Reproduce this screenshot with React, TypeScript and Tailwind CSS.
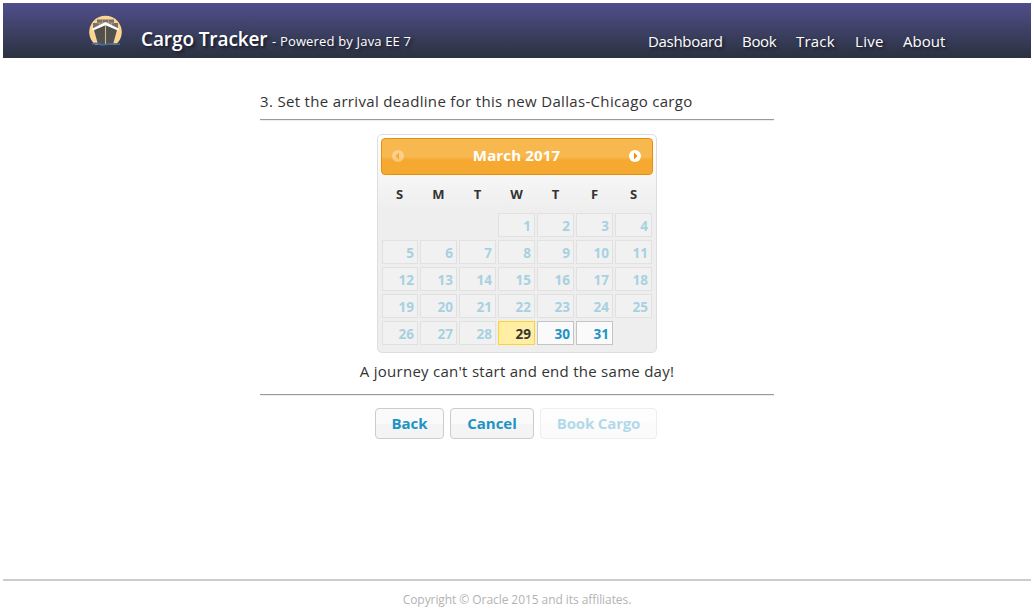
import React from "react";

const weeks: (number | null)[][] = [
  [null, null, null, 1, 2, 3, 4],
  [5, 6, 7, 8, 9, 10, 11],
  [12, 13, 14, 15, 16, 17, 18],
  [19, 20, 21, 22, 23, 24, 25],
  [26, 27, 28, 29, 30, 31, null],
];

function Logo() {
  return (
    <svg className="ml-[85px] mt-2.5 h-[34px] w-[35px] shrink-0" viewBox="0 0 35 34">
      <path d="M7 31.500A16.300 16.300 0 1 1 28 31.500Z" fill="#fdd592" />
      <path d="M9 10V6.500h17V10h4v7H5v-7Z" fill="#77716c" />
      <path d="M9 10h17M14.500 6.500V10M20.500 6.500V10M11.500 10v5M23.500 10v5" stroke="#bca684" strokeWidth=".8" fill="none" />
      <path d="M6 17 17.500 11 29 17 25 31.500H10Z" fill="#51504f" />
      <path d="M4.500 15.500 17.500 9 30.500 15.500v2.300L17.500 12.200 4.500 17.800Z" fill="#fff" />
      <path d="M17.500 12v19" stroke="#d6b981" strokeWidth="1.100" />
      <path d="M4 31q4-1.500 7 0t7 .5 7-.7 7 .5" stroke="#42719f" strokeWidth="1.400" fill="none" />
    </svg>
  );
}

function Arrow({ next = false }: { next?: boolean }) {
  return (
    <svg className={next ? "mb-0.5 h-3 w-3" : "mb-0.5 h-3 w-3 opacity-35"} viewBox="0 0 12 12">
      <circle cx="6" cy="6" r="6" fill="#fff" />
      <path d={next ? "M5 2.500v7L8.500 6Z" : "M7 2.500v7L3.500 6Z"} fill="#f08f00" />
    </svg>
  );
}

function Day({ day }: { day: number | null }) {
  if (day === null) return <span />;
  const look =
    day === 29
      ? "border-[#fed22f] bg-[#ffeea3] text-[#363636]"
      : day > 29
        ? "border-[#c4c4c4] bg-[#fafafa] text-[#1c94c4]"
        : "border-[#e1e1e1] bg-[#f1f1f1] text-[#a7d1e1]";
  return (
    <span className={`h-6 border pr-[3px] pt-px text-right text-[13.500px] font-bold leading-[23px] ${look}`}>{day}</span>
  );
}

export default function App() {
  return (
    <div className="flex h-[615px] flex-col bg-white p-[3px] pb-0 font-['Open_Sans','Noto_Sans',sans-serif] text-[#333]">
      <header className="flex h-[55px] shrink-0 bg-linear-to-b from-[#514e8c] to-[#2b3240] text-white [text-shadow:2px_2px_3px_#1b1b28]">
        <Logo />
        <div className="ml-[18px] flex items-baseline whitespace-pre pt-[22px]">
          <span className="w-[131px] text-[19px] font-semibold leading-7 tracking-[-0.100px]">Cargo Tracker</span>
          <span className="text-[13px] font-medium tracking-[0.170px]">- Powered by Java EE 7</span>
        </div>
        <nav className="ml-auto mr-[86px] flex gap-[19px] pt-[26px] text-[15px] font-medium leading-6">
          <a className="w-[75px] tracking-[-0.300px]">Dashboard</a>
          <a className="w-[35px] tracking-[-0.300px]">Book</a>
          <a className="w-[40px] tracking-[0.200px]">Track</a>
          <a className="w-[29px] tracking-[0.300px]">Live</a>
          <a className="w-[42px]">About</a>
        </nav>
      </header>

      <main className="mx-auto flex w-[514px] flex-col items-center">
        <h1 className="mt-[31px] h-[30px] w-full whitespace-nowrap text-[15px] leading-6 tracking-[0.325px]">3. Set the arrival deadline for this new Dallas-Chicago cargo</h1>
        <div className="h-0.5 w-full border-b border-t border-b-[#eee] border-t-[#9a9a9a]" />
        <section className="mt-[13px] h-[219px] w-[280px] rounded-[5px] border border-[#ddd] bg-linear-to-b from-white via-[#eee] via-35% to-[#eee] p-[3px]">
          <div className="flex h-[37px] items-center justify-between rounded-[4px] border border-[#e78f08] bg-linear-to-b from-[#f8b850] from-50% to-[#f6a931] to-60% pl-2.5 pr-[11px] text-white">
            <Arrow />
            <span className="pb-0.5 text-[15px] font-bold tracking-[0.150px]">March 2017</span>
            <Arrow next />
          </div>
          <div className="-ml-px grid h-[38px] grid-cols-7 pt-[7px] text-center text-[13px] font-bold leading-6">
            {["S", "M", "T", "W", "T", "F", "S"].map((d, i) => <span key={i}>{d}</span>)}
          </div>
          <div className="ml-px grid grid-cols-[36px_repeat(6,37px)] gap-x-0.5 gap-y-[3px]">
            {weeks.flat().map((d, i) => <Day key={i} day={d} />)}
          </div>
        </section>
        <p className="mt-1.5 h-[35px] whitespace-nowrap text-[15px] leading-6 tracking-[0.270px]">A journey can't start and end the same day!</p>
        <div className="h-0.5 w-full border-b border-t border-b-[#eee] border-t-[#9a9a9a]" />
        <div className="mt-3 flex gap-1.5 self-start pl-[115px] text-[15px] font-bold text-[#1c94c4]">
          <button className="h-[31px] w-[69px] rounded-[4px] border border-[#ccc] bg-linear-to-b from-[#fafafa] from-50% to-[#f4f4f4] to-50%">Back</button>
          <button className="h-[31px] w-[84px] rounded-[4px] border border-[#ccc] bg-linear-to-b from-[#fafafa] from-50% to-[#f4f4f4] to-50%">Cancel</button>
          <button disabled className="h-[31px] w-[117px] whitespace-nowrap rounded-[4px] border border-[#ccc] bg-linear-to-b from-[#fafafa] from-50% to-[#f4f4f4] to-50% tracking-[-0.150px] opacity-35">Book Cargo</button>
        </div>
      </main>

      <footer className="mt-auto h-9 border-t-2 border-[#ccc] pt-[9px] text-center text-[12px] leading-5 tracking-[-0.070px] text-[#b3b3b3]">
        Copyright © Oracle 2015 and its affiliates.
      </footer>
    </div>
  );
}
